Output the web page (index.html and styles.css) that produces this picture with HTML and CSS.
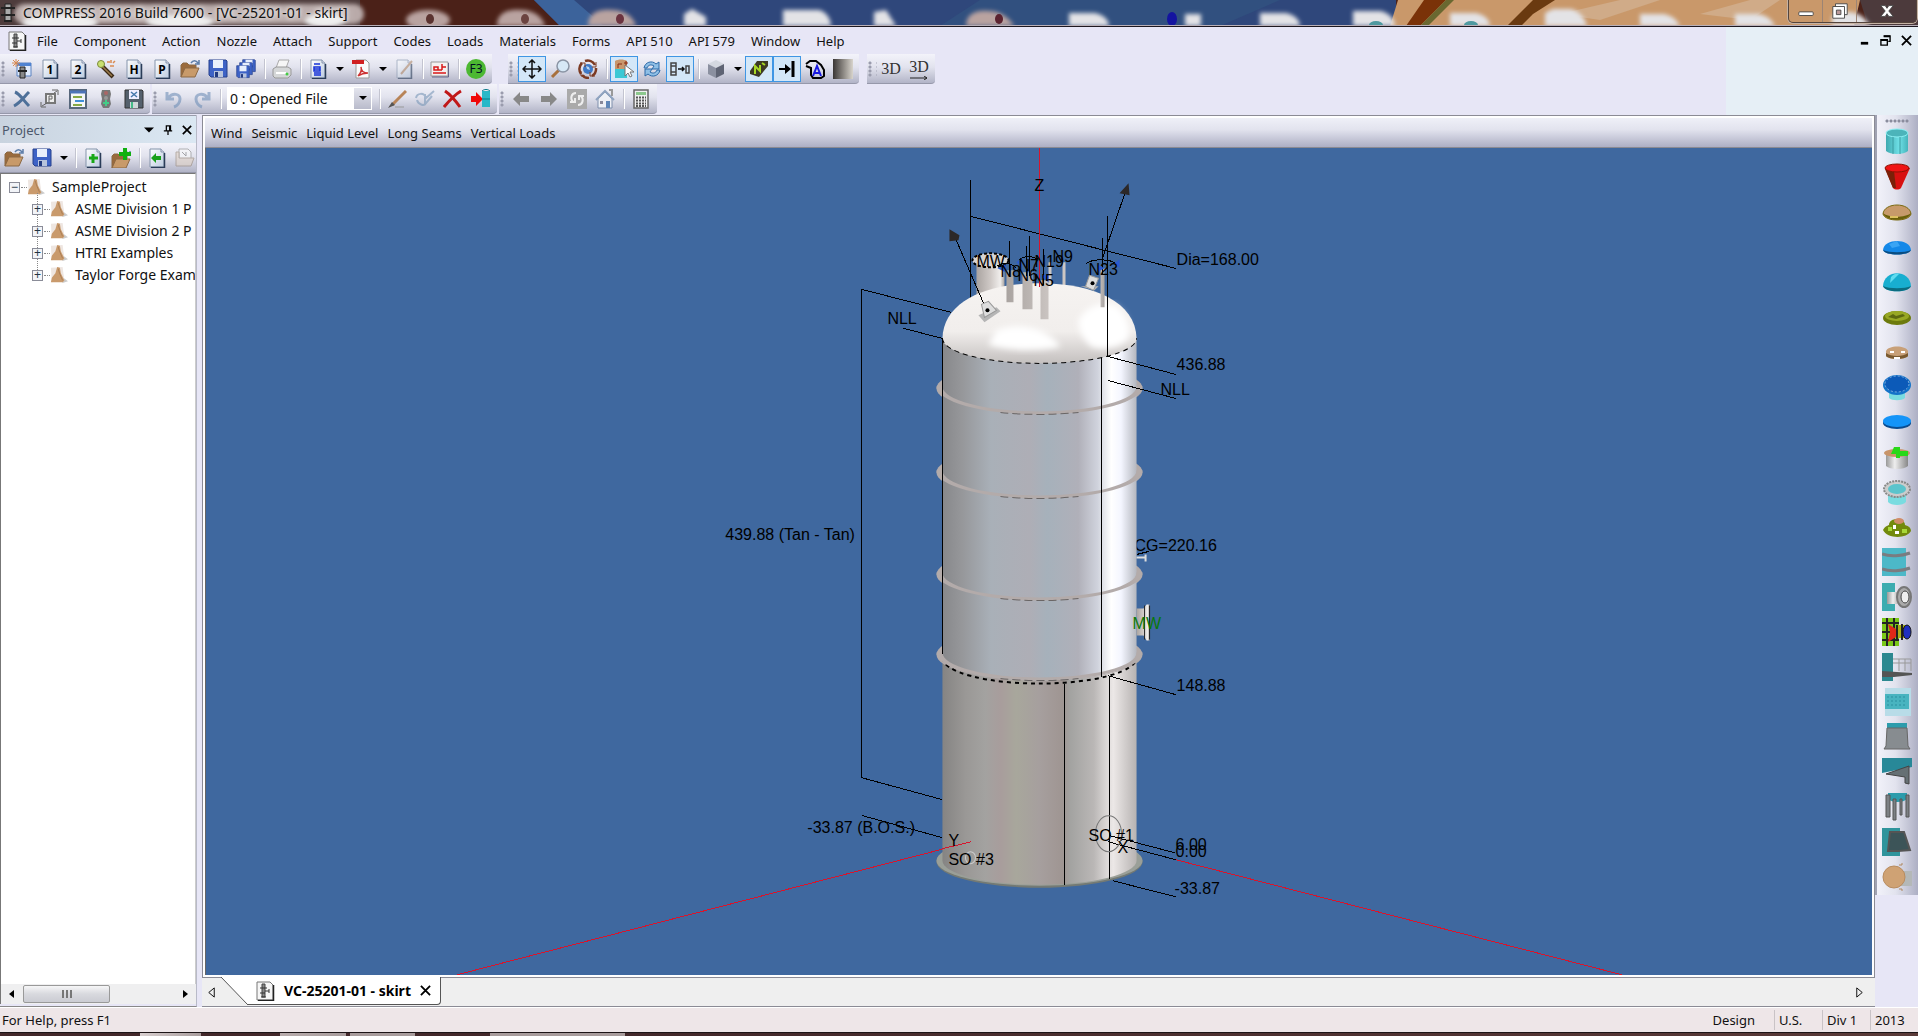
FILE: index.html
```html
<!DOCTYPE html>
<html lang="en">
<head>
	<meta charset="utf-8">
	<title>COMPRESS 2016 Build 7600 - [VC-25201-01 - skirt]</title>
	<link rel="stylesheet" href="styles.css">
</head>
<body>

<!-- shared icon parts -->
<svg class="defs" aria-hidden="true">
	<defs>
		<linearGradient id="gPage" x1="0" y1="0" x2="1" y2="1"><stop offset="0" stop-color="#fff"/><stop offset="1" stop-color="#bccbe0"/></linearGradient>
		<linearGradient id="gGrey" x1="0" x2="1"><stop offset="0" stop-color="#3a3634"/><stop offset="1" stop-color="#d8d4cc"/></linearGradient>
		<linearGradient id="gCyan" x1="0" x2="1"><stop offset="0" stop-color="#3fa9b0"/><stop offset=".6" stop-color="#6fe0e6"/><stop offset="1" stop-color="#46b4bb"/></linearGradient>
		<linearGradient id="gSteel" x1="0" x2="1"><stop offset="0" stop-color="#999"/><stop offset=".4" stop-color="#eee"/><stop offset="1" stop-color="#888"/></linearGradient>
		<symbol id="page" viewBox="0 0 20 20"><path d="M3 1h11l3 3v15H3z" fill="url(#gPage)" stroke="#8494ab"/><path d="M4 19.500h13.500V5" fill="none" stroke="#2a3c58" stroke-width="1.500"/><path d="M14 1v3h3" fill="#dde" stroke="#8494ab"/></symbol>
		<symbol id="folder" viewBox="0 0 20 20"><path d="M1 18V6l2-2h4l2 2h7v4" fill="#9a6a3c" stroke="#8b6844"/><path d="M1 18l4-9h14l-4 9z" fill="#c89a6a" stroke="#8b6844"/><path d="M11 4c2-3 5-3 7 0M19 1v4h-4" fill="none" stroke="#5d7da8" stroke-width="1.500"/></symbol>
		<symbol id="disk" viewBox="0 0 20 20"><path d="M1 1h17l1 1v16H3l-2-2z" fill="#3d62c6" stroke="#26408c"/><path d="M5 1h10v8H5z" fill="#e8effc"/><path d="M6 12h9v6H6z" fill="#b8c4dc"/><path d="M7 13h3v5H7z" fill="#223a80"/></symbol>
		<symbol id="vessel" viewBox="0 0 20 20"><path d="M2 1h13l3 3v15H2z" fill="#f6f6f6" stroke="#777"/><path d="M3 19.500h15.500V4" fill="none" stroke="#222" stroke-width="1.500"/><path d="M7 3h3v13H7z" fill="#888" stroke="#444"/><path d="M5 7h7M5 12h5M10 10h4M14 8v4M6 16h5" stroke="#333" fill="none"/></symbol>
		<symbol id="hand" viewBox="0 0 20 20"><path d="M1 2l13-1 2 15-14 2z" fill="#eee6e1"/><path d="M12 14h4l4 3-6 2z" fill="#ccc"/><path d="M8 1l3 1 1 6 4 8-2 2H1l1-5 4-5z" fill="#c99a6c"/><path d="M9 3l2 6 3 7" fill="none" stroke="#a87c52"/></symbol>
	</defs>
</svg>

<header class="titlebar">
	<svg class="glass" viewBox="0 0 1918 26" preserveAspectRatio="none" aria-hidden="true">
		<defs><filter id="soft" x="-20%" y="-50%" width="140%" height="200%"><feGaussianBlur stdDeviation="2"/></filter></defs>
		<rect width="1918" height="26" fill="#4b2118"/>
		<rect width="360" height="26" fill="#4e3c3c"/>
		<path d="M534 0h862v26H560z" fill="#2f477b"/>
		<path d="M534 0h40l30 26h-44z" fill="#3c639b"/>
		<path d="M980 0h300l-60 26H940z" fill="#31507f"/>
		<path d="M1398 0h462l-6 26h-464z" fill="#c9986a"/>
		<path d="M1424 0h22l-26 26h-14z" fill="#7a3208"/>
		<path d="M1446 0h8l-26 26h-8z" fill="#6a6830"/>
		<path d="M1533 0h22l-22 14-12 12h-14z" fill="#6a3a10"/>
		<path d="M1560 14l60-14h40l-60 20zM1700 14l50-14h30l-30 20z" fill="#d0ab88"/>
		<path d="M1860 0h58v26h-50z" fill="#4c3a3c"/>
		<g filter="url(#soft)">
			<rect x="14" y="4" width="350" height="20" rx="10" fill="#b9aaa9"/>
			<g fill="#eee"><ellipse cx="60" cy="23" rx="38" ry="8"/><ellipse cx="180" cy="22" rx="34" ry="7"/><ellipse cx="325" cy="21" rx="20" ry="7"/></g>
			<g fill="#b9a3a0"><ellipse cx="428" cy="20" rx="22" ry="10"/><path d="M497 26c0-14 12-17 24-16 14 0 22 8 24 16z"/><path d="M588 26c0-14 12-17 24-16 14 0 22 8 24 16z"/><path d="M966 26c0-12 10-16 22-15 14 0 22 8 26 15z"/></g>
			<g fill="#e3e3e6"><path d="M684 26V14l8-5 14 8v9z"/><path d="M783 26V10h36c8 2 12 10 12 16z"/><path d="M874 26V12l12-2 10 16z"/><path d="M1069 26V13h26c10 2 14 8 14 13z"/><path d="M1185 26V14h16v12z"/><path d="M1260 26V13h26c10 2 14 8 14 13z"/><path d="M1353 26V11h28c10 3 14 9 14 15z"/><path d="M1450 26V13h26c10 2 14 8 14 13z"/><path d="M1545 26V13l8-4h18c10 3 14 10 16 17z"/><path d="M1640 26V14h24c10 2 14 8 16 12z"/><path d="M1735 26V14h24c10 2 14 8 16 12z"/><path d="M1832 26V16l16-4c10 0 18 6 22 14z"/></g>
		</g>
		<g><ellipse cx="430" cy="19" rx="4" ry="5" fill="#5b3330"/><ellipse cx="525" cy="19" rx="4" ry="5" fill="#6b4340"/><ellipse cx="620" cy="19" rx="4" ry="5" fill="#6b3340"/><ellipse cx="999" cy="19" rx="4" ry="5" fill="#5b2330"/><ellipse cx="1376" cy="25" rx="7" ry="4" fill="#4f9aa0"/><ellipse cx="1471" cy="25" rx="7" ry="4" fill="#4f9aa0"/><ellipse cx="1172" cy="19" rx="5" ry="7" fill="#1414a0"/></g>
	</svg>
	<svg class="icon app" viewBox="0 0 20 20"><path d="M7 1h6v17H7z" fill="#aaa" stroke="#222"/><path d="M3 5h14M3 12h14M6 18h8" stroke="#222" stroke-width="2"/></svg>
	<h1 class="caption">COMPRESS 2016 Build 7600 - [VC-25201-01 - skirt]</h1>
	<div class="winbuttons">
		<button aria-label="Minimize"><svg viewBox="0 0 20 20"><rect x="2" y="11" width="16" height="4" rx="1" fill="#fff" stroke="#444"/></svg></button>
		<button aria-label="Restore"><svg viewBox="0 0 20 20"><path d="M5 2h13v12H5z" fill="#fff" stroke="#444"/><path d="M2 5h13v13H2z" fill="#fff" stroke="#444"/><path d="M6 9h5v5H6z" fill="#b99" stroke="#444"/></svg></button>
		<button aria-label="Close" class="wide"><svg viewBox="0 0 20 20"><path d="M3 4h5l2 3 2-3h5l-5 6 5 6h-5l-2-3-2 3H3l5-6z" fill="#fff" stroke="#444"/></svg></button>
	</div>
</header>

<nav class="menubar">
	<svg class="icon doc"><use href="#vessel"/></svg>
	<button>File</button><button>Component</button><button>Action</button><button>Nozzle</button><button>Attach</button><button>Support</button><button>Codes</button><button>Loads</button><button>Materials</button><button>Forms</button><button>API 510</button><button>API 579</button><button>Window</button><button>Help</button>
	<div class="mdibuttons">
		<button aria-label="Minimize document"><svg viewBox="0 0 12 12"><path d="M2 9h8" stroke="#000" stroke-width="3"/></svg></button>
		<button aria-label="Restore document"><svg viewBox="0 0 12 12"><path d="M4 1h7v6H9M1 5h7v6H1z" fill="none" stroke="#000" stroke-width="1.500"/><path d="M4 1.500h7M1 5.500h7" stroke="#000" stroke-width="2"/></svg></button>
		<button aria-label="Close document"><svg viewBox="0 0 12 12"><path d="M1 1l10 10M11 1L1 11" stroke="#000" stroke-width="2"/></svg></button>
	</div>
</nav>

<div class="toolbars">
	<div class="toolrow">
		<div class="toolbar">
			<span class="grip"></span>
			<button aria-label="New"><svg viewBox="0 0 20 20"><path d="M5 4h14v13H5z" fill="#dfeafb" stroke="#5a82c0"/><path d="M5 4h14v3H5z" fill="#4f83d2"/><path d="M8 8h5v11H8z" fill="#888" stroke="#222"/><path d="M6 12h9" stroke="#222" stroke-width="2"/><path d="M4 0v8M0 4h8M1 1l6 6M7 1L1 7" stroke="#d98a52"/></svg></button>
			<button aria-label="New Division 1"><svg viewBox="0 0 20 20"><use href="#page"/><text x="10" y="15" class="glyph">1</text></svg></button>
			<button aria-label="New Division 2"><svg viewBox="0 0 20 20"><use href="#page"/><text x="10" y="15" class="glyph">2</text></svg></button>
			<button aria-label="Wizard"><svg viewBox="0 0 20 20"><path d="M5 6l12 12" stroke="#3c2a16" stroke-width="4"/><path d="M6 7l10 10" stroke="#9a7a4c" stroke-width="1.500"/><circle cx="5" cy="5" r="3.500" fill="#c9e070" stroke="#7a8a3a"/><path d="M11 3h3M15 1v3M14 7h4M17 4l2-2" stroke="#d98a52" stroke-width="1.500"/></svg></button>
			<button aria-label="Heat exchanger"><svg viewBox="0 0 20 20"><use href="#page"/><text x="10" y="15" class="glyph">H</text></svg></button>
			<button aria-label="New project"><svg viewBox="0 0 20 20"><use href="#page"/><text x="10" y="15" class="glyph">P</text></svg></button>
			<button aria-label="Open"><svg viewBox="0 0 20 20"><use href="#folder"/></svg></button>
			<button aria-label="Save"><svg viewBox="0 0 20 20"><use href="#disk"/></svg></button>
			<button aria-label="Save all"><svg viewBox="0 0 20 20"><use href="#disk" x="6" width="14" height="14"/><use href="#disk" x="3" y="3" width="14" height="14"/><use href="#disk" y="6" width="14" height="14"/></svg></button>
			<span class="sep"></span>
			<button aria-label="Print"><svg viewBox="0 0 20 20"><path d="M7 1h10l-3 8H4z" fill="#f6f6f6" stroke="#aaa"/><path d="M1 10l3-2h12l3 2v6l-3 3H3l-2-2z" fill="#d5d7d8" stroke="#999"/><path d="M4 14h10" stroke="#fff" stroke-width="2"/><circle cx="15" cy="15" r="1.500" fill="#4c4"/></svg></button>
			<span class="sep"></span>
			<button aria-label="Report"><svg viewBox="0 0 20 20"><use href="#page"/><path d="M6 5h6M6 8h6v4H6zM6 10h6M6 14h7M6 16h7" stroke="#1432d8" stroke-width="1.500" fill="none"/></svg></button>
			<button class="arrow" aria-label="Report options"></button>
			<button aria-label="PDF"><svg viewBox="0 0 20 20"><path d="M5 1h10l3 3v15H5z" fill="#fafafa" stroke="#999"/><path d="M1 1h12v4H1z" fill="#d02020"/><path d="M7 17c3-3 4-6 3-9 0 4 3 6 7 6-4 0-7 1-10 3z" fill="none" stroke="#c33" stroke-width="1.500"/></svg></button>
			<button class="arrow" aria-label="PDF options"></button>
			<button aria-label="Edit page" class="dim"><svg viewBox="0 0 20 20"><use href="#page"/><path d="M18 2L7 15" stroke="#b08a6a" stroke-width="2"/></svg></button>
			<span class="sep"></span>
			<button aria-label="Overlay"><svg viewBox="0 0 20 20"><path d="M1 3h17v14H1z" fill="#f4f0f0" stroke="#999"/><path d="M18.500 4v14H2" fill="none" stroke="#668"/><path d="M3 14h13M4 11V8h4v3zM4 11h8M12 5v6M12 8h4" stroke="#d81818" stroke-width="1.500" fill="none"/></svg></button>
			<span class="sep"></span>
			<button aria-label="F3"><svg viewBox="0 0 20 20"><circle cx="10" cy="10" r="10" fill="#4cb832"/><text x="10" y="14" class="f3">F3</text></svg></button>
		</div>
		<div class="toolbar apart">
			<span class="grip"></span>
			<button aria-label="Pan" class="on"><svg viewBox="0 0 20 20"><path d="M10 1v18M1 10h18M7 4l3-3 3 3M7 16l3 3 3-3M4 7l-3 3 3 3M16 7l3 3-3 3" stroke="#111" stroke-width="1.500" fill="none"/></svg></button>
			<button aria-label="Zoom"><svg viewBox="0 0 20 20"><path d="M9 11l-7 7" stroke="#a8703c" stroke-width="3"/><circle cx="13" cy="7" r="6" fill="#d6e8f6" stroke="#8a94a4" stroke-width="1.500"/></svg></button>
			<button aria-label="Rotate"><svg viewBox="0 0 20 20"><circle cx="10" cy="10" r="5" fill="#3f7ac8"/><path d="M8 7l3 1 1 3-3-1z" fill="#b8d4f0"/><path d="M3 15A8.500 8.500 0 0 1 4 4M7 2a8.500 8.500 0 0 1 10 4M18 9a8.500 8.500 0 0 1-4 8M11 19a8.500 8.500 0 0 1-7-3" fill="none" stroke="#7c3a22" stroke-width="2.500"/><path d="M2 4h5v4M18 3v5h-4M17 17h-5v-4M3 12v5h4" fill="none" stroke="#7c3a22"/></svg></button>
			<span class="sep"></span>
			<button aria-label="Select" class="on"><svg viewBox="0 0 20 20"><path d="M1 2c3-2 9-2 12 0v8H1z" fill="#c8976c"/><path d="M1 10h12v9H1z" fill="#3cc8d4"/><path d="M4 9V5h4M10 4h4M12 2v4" stroke="#8a2a10" fill="none"/><path d="M11 6v11l3-3 2 4 2-1-2-4h4z" fill="#fff" stroke="#777"/></svg></button>
			<button aria-label="Refresh"><svg viewBox="0 0 20 20"><path d="M2 9c1-6 8-8 12-4l3-2v7h-7l2-3C9 5 6 6 5 9zM18 11c-1 6-8 8-12 4l-3 2v-7h7l-2 3c3 2 6 1 7-2z" fill="#8ebfe6" stroke="#2d6aa8"/></svg></button>
			<button aria-label="Fit" class="on"><svg viewBox="0 0 20 20"><path d="M1 4h5v12H1zM1 7h5M1 13h5M16 7h3v7h-3z" fill="none" stroke="#444" stroke-width="1.500"/><path d="M8 10h6M12 8l2 2-2 2" stroke="#111" stroke-width="1.500" fill="none"/></svg></button>
			<span class="sep"></span>
			<button aria-label="View"><svg viewBox="0 0 20 20"><path d="M2 5l8-4 8 4-8 4z" fill="#d4d8e0"/><path d="M2 5l8 4v10l-8-4z" fill="#8b90a0"/><path d="M18 5l-8 4v10l8-4z" fill="#5f6474"/></svg></button>
			<button class="arrow" aria-label="View options"></button>
			<button aria-label="Nozzle labels" class="on"><svg viewBox="0 0 20 20"><path d="M1 12L8 2h11v5l-9 11-9-3z" fill="#3c3a24"/><path d="M6 15V7l5 5V6M13 4l3 2" stroke="#a6d824" stroke-width="2" fill="none"/></svg></button>
			<button aria-label="Dimensions" class="on"><svg viewBox="0 0 20 20"><path d="M2 9h6V5l6 5-6 5v-4H2z" fill="#000"/><path d="M16 2v16" stroke="#000" stroke-width="3"/></svg></button>
			<button aria-label="Annotations"><svg viewBox="0 0 20 20"><path d="M1 5l4-3h6l5 4 3 5v6l-3 2H8l-2-3V9L1 7" fill="none" stroke="#000" stroke-width="2"/><path d="M8 17l4-10 4 10M9 14h6" fill="none" stroke="#1818e0" stroke-width="2"/></svg></button>
			<button aria-label="Transparency"><svg viewBox="0 0 20 20"><path d="M0 0h20v20H0z" fill="url(#gGrey)"/></svg></button>
		</div>
		<div class="toolbar">
			<span class="grip"></span>
			<button class="threed">3D</button>
			<button class="threed">3D<svg class="under" viewBox="0 0 18 4"><path d="M0 2h17M14 0l3 2-3 2" stroke="#222" fill="none"/></svg></button>
		</div>
	</div>
	<div class="toolrow">
		<div class="toolbar">
			<span class="grip"></span>
			<button aria-label="Cut"><svg viewBox="0 0 20 20"><path d="M3 3c5 2 8 8 14 14M17 3C12 8 8 14 2 17" stroke="#4e7099" stroke-width="3" fill="none"/></svg></button>
			<button aria-label="Properties"><svg viewBox="0 0 20 20"><path d="M6 5h9v9H6z" fill="#eee" stroke="#777" stroke-width="2"/><path d="M9 13V7h3v3H9M1 13v5h5M2 17l5-3M12 1h6v5M17 2l-3 2" stroke="#666" fill="none"/></svg></button>
			<button aria-label="List"><svg viewBox="0 0 20 20"><path d="M2 1h16v18H2z" fill="#f4f6f8" stroke="#57677c" stroke-width="2"/><path d="M2 3h16" stroke="#4d74b8" stroke-width="3"/><path d="M5 8h9M5 16h9" stroke="#86a844" stroke-width="2"/><path d="M7 12h9" stroke="#3f90d8" stroke-width="2"/></svg></button>
			<button aria-label="Status"><svg viewBox="0 0 20 20"><path d="M6 1h8l1 4-1 5 1 5-2 4H7l-2-4 1-5-1-5z" fill="#777"/><circle cx="10" cy="4" r="2" fill="#a66"/><circle cx="10" cy="9" r="2" fill="#999"/><path d="M10 11v6M7 14h6" stroke="#4c8" stroke-width="2"/></svg></button>
			<button aria-label="Export"><svg viewBox="0 0 20 20"><path d="M1 1h17l1 1v17H1z" fill="#54606c" stroke="#333"/><path d="M5 1h10v9H5z" fill="#eef"/><path d="M7 3l6 5M13 3L7 8" stroke="#47a" stroke-width="1.500"/><path d="M6 13h8v6H6z" fill="#cfd6d8"/><path d="M8 13v6" stroke="#4b8" stroke-width="2"/></svg></button>
		</div>
		<div class="toolbar">
			<span class="grip"></span>
			<button aria-label="Undo" class="dim"><svg viewBox="0 0 20 20"><path d="M3 3v7h7M4 9c5-6 12-4 12 1 0 4-3 7-6 8" stroke="#7090b8" stroke-width="3" fill="none"/></svg></button>
			<button aria-label="Redo" class="dim"><svg viewBox="0 0 20 20"><path d="M17 3v7h-7M16 9C11 3 4 5 4 10c0 4 3 7 6 8" stroke="#7090b8" stroke-width="3" fill="none"/></svg></button>
			<span class="sep"></span>
			<span class="combo"><select aria-label="History"><option>0 : Opened File</option></select></span>
			<span class="sep"></span>
			<button aria-label="Edit"><svg viewBox="0 0 20 20"><path d="M19 2L5 16" stroke="#b88458" stroke-width="3"/><path d="M5 13l-4 6 7-3z" fill="#555"/><path d="M8 18h9" stroke="#999"/></svg></button>
			<button aria-label="Apply" class="dim"><svg viewBox="0 0 20 20"><path d="M1 9c1-5 8-6 10 0l8-7M2 11c1 4 7 7 9 3l6-7M10 5v10" stroke="#7a98b8" stroke-width="2" fill="none"/></svg></button>
			<button aria-label="Delete"><svg viewBox="0 0 20 20"><path d="M2 2c6 4 10 9 15 16M18 2C11 6 6 12 1 18" stroke="#c01818" stroke-width="3" fill="none"/></svg></button>
			<button aria-label="Insert"><svg viewBox="0 0 20 20"><path d="M0 7h5V3l7 7-7 7v-4H0z" fill="#f00808"/><path d="M11 2h8v16h-8z" fill="#28b8c8"/><path d="M11 2c2-2 6-2 8 0M11 10h8" stroke="#087888" fill="none"/></svg></button>
		</div>
		<div class="toolbar">
			<span class="grip"></span>
			<button aria-label="Back"><svg viewBox="0 0 20 20"><path d="M2 10l7-7v4h9v6H9v4z" fill="#888"/></svg></button>
			<button aria-label="Forward"><svg viewBox="0 0 20 20"><path d="M18 10l-7-7v4H2v6h9v4z" fill="#888"/></svg></button>
			<button aria-label="Reload"><svg viewBox="0 0 20 20"><path d="M0 0h20v20H0z" fill="#aaa"/><path d="M9 4c-5 0-6 6-3 9M3 13h5V9M11 16c5 0 6-6 3-9M17 7h-5v4" stroke="#eee" stroke-width="2" fill="none"/></svg></button>
			<button aria-label="Home"><svg viewBox="0 0 20 20"><path d="M3 10v9h14v-9l-7-7z" fill="#eef0f6" stroke="#7f8fac"/><path d="M1 11l9-9 9 9" fill="none" stroke="#90a4c0" stroke-width="2"/><path d="M14 1h3v6" fill="none" stroke="#999" stroke-width="2"/><path d="M11 12h4v7h-4z" fill="#5f86b8"/><path d="M5 12h3v3H5z" fill="#889"/></svg></button>
			<span class="sep"></span>
			<button aria-label="Calculator"><svg viewBox="0 0 20 20"><path d="M3 1h14v18H3z" fill="#f0f0f0" stroke="#666" stroke-width="1.500"/><path d="M5 3h10v3H5z" fill="#8cc88c"/><path d="M5 8.500h10M5 11.500h10M5 14.500h10M5 17h10" stroke="#555" stroke-width="2" stroke-dasharray="2 1"/></svg></button>
		</div>
	</div>
</div>

<div class="workspace">
	<aside class="project">
		<div class="panelhead">
			<h2>Project</h2>
			<button aria-label="Menu"><svg viewBox="0 0 12 12"><path d="M0 3h12L6 9z"/></svg></button>
			<button aria-label="Pin"><svg viewBox="0 0 12 12"><path d="M4 1h5v6H4zM1 7h10M6 7v5M8 1v6" fill="none" stroke="#000" stroke-width="1.500"/></svg></button>
			<button aria-label="Close panel"><svg viewBox="0 0 12 12"><path d="M1 1l10 10M11 1L1 11" stroke="#000" stroke-width="2"/></svg></button>
		</div>
		<div class="toolbar paneltools">
			<button aria-label="Open project"><svg viewBox="0 0 20 20"><use href="#folder"/></svg></button>
			<button aria-label="Save project"><svg viewBox="0 0 20 20"><use href="#disk"/></svg></button>
			<button class="arrow" aria-label="Save options"></button>
			<span class="sep"></span>
			<button aria-label="Add file"><svg viewBox="0 0 20 20"><use href="#page"/><path d="M10 6v9M6 10h9" stroke="#18a818" stroke-width="3"/></svg></button>
			<button aria-label="Add folder"><svg viewBox="0 0 20 20"><use href="#folder" y="2"/><path d="M14 0v12M8 6h12" stroke="#10b010" stroke-width="4"/></svg></button>
			<span class="sep"></span>
			<button aria-label="Import"><svg viewBox="0 0 20 20"><use href="#page"/><path d="M4 10l5-5v3h5v4H9v3z" fill="#18a018"/></svg></button>
			<button aria-label="Open copy" class="dim"><svg viewBox="0 0 20 20"><path d="M4 1h9l3 3v8H4z" fill="#fafafa" stroke="#888"/><path d="M1 18V4h3v6h15l-3 8z" fill="#e0d2c6" stroke="#988878"/><path d="M7 4l4 4V4" stroke="#777" fill="none"/></svg></button>
		</div>
		<ul class="tree">
			<li><span class="twist">&minus;</span><svg class="icon"><use href="#hand"/></svg>SampleProject</li>
			<li class="sub"><span class="twist">+</span><svg class="icon"><use href="#hand"/></svg>ASME Division 1 P</li>
			<li class="sub"><span class="twist">+</span><svg class="icon"><use href="#hand"/></svg>ASME Division 2 P</li>
			<li class="sub"><span class="twist">+</span><svg class="icon"><use href="#hand"/></svg>HTRI Examples</li>
			<li class="sub"><span class="twist">+</span><svg class="icon"><use href="#hand"/></svg>Taylor Forge Exam</li>
		</ul>
		<div class="hscroll">
			<button aria-label="Scroll left"><svg viewBox="0 0 12 12"><path d="M8 2v8L3 6z"/></svg></button>
			<span class="thumb"><i></i><i></i><i></i></span>
			<button aria-label="Scroll right"><svg viewBox="0 0 12 12"><path d="M4 2v8l5-4z"/></svg></button>
		</div>
	</aside>

	<main class="document">
		<div class="frame">
			<nav class="subbar"><button>Wind</button><button>Seismic</button><button>Liquid Level</button><button>Long Seams</button><button>Vertical Loads</button></nav>
			<div class="canvas">
				<svg viewBox="206 148 1665 826" role="img" aria-label="Vertical vessel with skirt">
					<defs>
						<linearGradient id="shell" x1="0" x2="1"><stop offset="0" stop-color="#87888b"/><stop offset=".1" stop-color="#96979a"/><stop offset=".25" stop-color="#a9b0b8"/><stop offset=".45" stop-color="#aeaeb6"/><stop offset=".54" stop-color="#a6b1bb"/><stop offset=".7" stop-color="#b0b0b9"/><stop offset=".8" stop-color="#d0d3dd"/><stop offset=".87" stop-color="#fff"/><stop offset=".92" stop-color="#f4f6ff"/><stop offset="1" stop-color="#b4b7bf"/></linearGradient>
						<linearGradient id="skirt" x1="0" x2="1"><stop offset="0" stop-color="#858483"/><stop offset=".12" stop-color="#9a9896"/><stop offset=".22" stop-color="#a3a2a0"/><stop offset=".3" stop-color="#a89d9c"/><stop offset=".38" stop-color="#a8a79c"/><stop offset=".5" stop-color="#a69f9e"/><stop offset=".62" stop-color="#9f9592"/><stop offset=".66" stop-color="#a3a3a1"/><stop offset=".78" stop-color="#bab7b6"/><stop offset=".88" stop-color="#ece8e7"/><stop offset="1" stop-color="#b7b3b2"/></linearGradient>
						<linearGradient id="dome" x1="0" y1="0" x2="0" y2="1"><stop offset="0" stop-color="#f6f3f1"/><stop offset=".6" stop-color="#f1eeec"/><stop offset="1" stop-color="#c4c0bf"/></linearGradient>
						<linearGradient id="pipe" x1="0" x2="1"><stop offset="0" stop-color="#a9a3a0"/><stop offset=".5" stop-color="#cfc9c6"/><stop offset=".85" stop-color="#f0eeec"/><stop offset="1" stop-color="#a9a3a0"/></linearGradient>
						<filter id="shine"><feGaussianBlur stdDeviation="3"/></filter>
						<g id="ringBack"><ellipse cx="1039" cy="0" rx="103" ry="26" fill="#b3abaa"/></g>
						<g id="ringFront"><path d="M936 -2A103 28 0 0 0 1142 -2L1136 -2A97 25 0 0 1 942 -2Z" fill="#b3abaa"/><path d="M1000 24A103 27 0 0 0 1078 24" fill="none" stroke="#6a6666" stroke-dasharray="8 4"/></g>
					</defs>
					<!-- lines and labels behind the vessel -->
					<g class="red"><path d="M971 841L457 974M1175 859L1621 974"/></g>
					<g class="line">
						<path d="M970 180v120M970 216L1175 268M951 312L861 289V777L942 799M862 815L942 837M903 328L942 338M1136 554l12-3"/>
					</g>
					<text x="1134" y="551">CG=220.16</text>
					<!-- shell, rings and skirt -->
					<ellipse cx="1039" cy="861" rx="103" ry="26" fill="#747a74"/>
					<ellipse cx="1039" cy="860" rx="103" ry="25" fill="#9a9f98"/>
					<path d="M942 650V860A97 24 0 0 0 1136 860V650Z" fill="url(#skirt)"/>
					<use href="#ringBack" y="388"/><use href="#ringBack" y="472"/><use href="#ringBack" y="574"/><use href="#ringBack" y="654"/>
					<path d="M942 338V655A97 25 0 0 0 1136 655V338Z" fill="url(#shell)"/>
					<path d="M942 657A97 26 0 0 0 1136 657" fill="none" stroke="#000" stroke-width="2" stroke-dasharray="4 4"/>
					<use href="#ringFront" y="388"/><use href="#ringFront" y="472"/><use href="#ringFront" y="574"/><use href="#ringFront" y="654"/>
					<!-- nozzles behind the head crown -->
					<path d="M976 264h28v40h-28z" fill="url(#pipe)"/>
					<path d="M1062 262h3v28h-3zM1048 262h3v26h-3z" fill="#ccc6c3"/>
					<path d="M942 338C943 302 984 283 1039 283S1135 302 1136 338A97 25 0 0 1 942 338Z" fill="url(#dome)"/>
					<g filter="url(#shine)" fill="#fff"><path d="M996 330c20-8 50-4 64 16-20 6-60 4-72-2z"/><path d="M1078 320c8-16 28-20 38-14 10 8 14 20 12 32-10 12-30 12-38 8-8-8-12-16-12-26z"/></g>
					<path d="M942 338A97 25 0 0 0 1136 338" fill="none" stroke="#000" stroke-dasharray="5 4"/>
					<ellipse cx="990" cy="260" rx="18" ry="7" fill="#d8d4d2" stroke="#000" stroke-width="2" stroke-dasharray="3 2"/>
					<path d="M1006 270h7v32h-7zM1022 272h10v37h-10zM1040 280h8v39h-8zM1100 268h4v39h-4z" fill="url(#pipe)"/>
					<g class="line">
						<path d="M942 338V653M1101 358V676M1107 216V356L1175 374M1107 380l68 18M1107 675l68 19M1064 683v201M1109 676v202M1109 835l65 17M1107 841l68 18M1112 880l63 16"/>
						<path d="M1009 241v34M1029 236v40M1026 246v30M1043 249v36M1102 238v36M1102 258l22-64M984 305L955 238"/>
						<path d="M1085 264c6-6 24-6 32 0M1018 260c8-6 14-4 20-1M996 266c8-5 14-4 20 2"/>
					</g>
					<path d="M1128 183l1 12-10-2zM949 229l10 6-1 5-9 1z" fill="#2c2828"/>
					<path d="M997 268l8-4v8zM1016 262l5-4v9zM1096 264l8 4-6 3zM1114 263l5-4v9zM1040 276l8-3v9z" fill="#2a5ad0"/>
					<path d="M978 315l18-8 4 4-16 11z" fill="#b5b5b5"/><path d="M981 304l7-3 8 9-12 7z" fill="#ddd" stroke="#999"/><circle cx="987" cy="310" r="2"/>
					<path d="M1080 286l14 4 4-4z" fill="#b5b5b5"/><path d="M1089 275l9 3-5 12-8-4z" fill="#ddd" stroke="#999"/><circle cx="1092" cy="283" r="2"/>
					<path d="M1136 608h7l3-4h3v36h-3l-3-5h-7z" fill="url(#pipe)"/><path d="M1144 605v34M1149 605v34" stroke="#222"/>
					<path d="M1136 557h9M1145 554v7" stroke="#ddd" stroke-width="2"/>
					<ellipse cx="1108" cy="833" rx="13" ry="18" fill="none" stroke="#777"/>
					<ellipse cx="970" cy="857" rx="5" ry="6" fill="none" stroke="#ccc"/>
					<g class="red"><path d="M1039 148V287M942 848L971 841"/></g>
					<!-- labels -->
					<text x="1034" y="191">Z</text>
					<text x="1176" y="265">Dia=168.00</text>
					<text x="887" y="324">NLL</text>
					<text x="1176" y="370">436.88</text>
					<text x="1160" y="395">NLL</text>
					<text x="725" y="540">439.88 (Tan - Tan)</text>
					<text x="1176" y="690">148.88</text>
					<text x="1132" y="628" class="green">MW</text>
					<text x="976" y="267">MW</text>
					<text x="1000" y="277">N8</text>
					<text x="1018" y="271">N7</text>
					<text x="1017" y="281">N6</text>
					<text x="1033" y="286">N5</text>
					<text x="1034" y="267">N19</text>
					<text x="1052" y="262">N9</text>
					<text x="1088" y="275">N23</text>
					<text x="807" y="832">-33.87 (B.O.S.)</text>
					<text x="948" y="845">Y</text>
					<text x="948" y="864">SO #3</text>
					<text x="1088" y="840">SO #1</text>
					<text x="1117" y="852">X</text>
					<text x="1175" y="849">6.00</text>
					<text x="1175" y="856">0.00</text>
					<text x="1174" y="893">-33.87</text>
				</svg>
			</div>
		</div>
		<div class="tabstrip">
			<button aria-label="Previous tab"><svg viewBox="0 0 12 12"><path d="M9 1v10L3 6z" fill="none" stroke="#000"/></svg></button>
			<div class="tab">
				<svg class="slant" viewBox="0 0 27 28" preserveAspectRatio="none"><path d="M0 0h27v28z" fill="#fff"/><path d="M0 0l27 28" stroke="#555"/></svg>
				<div class="tabbody">
					<svg class="icon"><use href="#vessel"/></svg>
					<a href="#">VC-25201-01 - skirt</a>
					<button aria-label="Close tab"><svg viewBox="0 0 12 12"><path d="M1 1l10 10M11 1L1 11" stroke="#000" stroke-width="2"/></svg></button>
				</div>
			</div>
			<button class="next" aria-label="Next tab"><svg viewBox="0 0 12 12"><path d="M3 1v10l6-5z" fill="none" stroke="#000"/></svg></button>
		</div>
	</main>

	<div class="palette">
		<span class="dots"></span>
		<button aria-label="Cylinder"><svg viewBox="0 0 30 28"><path d="M4 5v18c4 4 18 4 22 0V5z" fill="url(#gCyan)"/><ellipse cx="15" cy="5" rx="11" ry="4" fill="#4cb4ba" stroke="#8ff0f4"/><path d="M11 9v17M18 9v17" stroke="#3a9aa0"/></svg></button>
		<button aria-label="Cone"><svg viewBox="0 0 30 28"><path d="M3 5l8 20c2 2 6 2 8 0L28 5z" fill="#d81010"/><path d="M3 6l8 19h3L12 8z" fill="#7a2008"/><ellipse cx="15" cy="5" rx="12" ry="4" fill="#f01414" stroke="#8a1404"/></svg></button>
		<button aria-label="Ellipsoidal head"><svg viewBox="0 0 30 28"><path d="M1 16C2 4 28 4 29 16c-2 8-26 8-28 0z" fill="#c79a6a" stroke="#7a6a10"/><path d="M1 15c6 5 22 5 28 0-2 9-26 9-28 0z" fill="#6a6008"/><path d="M8 19h8" stroke="#ddc060" stroke-width="2"/></svg></button>
		<button aria-label="Torispherical head"><svg viewBox="0 0 30 28"><path d="M1 17C2 5 28 5 29 17c-2 6-26 6-28 0z" fill="#1488e8"/><path d="M1 17c6 3 22 3 28 0-2 6-26 6-28 0z" fill="#0a4c80"/><path d="M7 11l8-3 3 5-8 2z" fill="#3aa4f4"/></svg></button>
		<button aria-label="Hemispherical head"><svg viewBox="0 0 30 28"><path d="M1 18C2 1 28 1 29 18c-2 7-26 7-28 0z" fill="#18aed0"/><path d="M1 18c6 3 22 3 28 0-2 7-26 7-28 0z" fill="#0c6c80"/><path d="M9 9c3-4 8-4 8-3L8 15z" fill="#60dcf0"/></svg></button>
		<button aria-label="Toriconical head"><svg viewBox="0 0 30 28"><ellipse cx="15" cy="15" rx="14" ry="7" fill="#6c7a0c"/><ellipse cx="15" cy="13" rx="12" ry="5" fill="#98a824"/><path d="M6 14l5-3 3 2 7-2 2 2-9 3z" fill="#5c6810"/></svg></button>
		<button aria-label="Dished cover"><svg viewBox="0 0 30 28"><path d="M4 13c2-6 20-6 22 0v5c-3 4-19 4-22 0z" fill="#c8a078"/><path d="M4 15c5 4 17 4 22 0v3c-3 4-19 4-22 0z" fill="#7a5a30"/><path d="M8 13h4v2H8zM19 13h4v2h-4zM12 19h6v2h-6z" fill="#fff"/></svg></button>
		<button aria-label="Bolted cover"><svg viewBox="0 0 30 28"><path d="M7 18h16v7c-3 3-13 3-16 0z" fill="#7adce0"/><ellipse cx="15" cy="12" rx="14" ry="10" fill="#1472c8"/><ellipse cx="15" cy="11" rx="12" ry="8" fill="#0c5ab8" stroke="#80b0e0" stroke-dasharray="2 2"/></svg></button>
		<button aria-label="Flat head"><svg viewBox="0 0 30 28"><ellipse cx="15" cy="15" rx="14" ry="6" fill="#0a4c90"/><ellipse cx="15" cy="13" rx="14" ry="6" fill="#1494f8"/></svg></button>
		<button aria-label="Flat cover"><svg viewBox="0 0 30 28"><path d="M4 10h22v13c-4 4-18 4-22 0z" fill="url(#gSteel)"/><ellipse cx="15" cy="10" rx="13" ry="4" fill="#c8946a"/><path d="M12 4h6v4h8v5h-8v2h-4v-4H9z" fill="#28d818"/></svg></button>
		<button aria-label="Flange"><svg viewBox="0 0 30 28"><path d="M6 14h18v10c-3 4-15 4-18 0z" fill="#7adce0"/><ellipse cx="15" cy="11" rx="13" ry="8" fill="#ccc" stroke="#888" stroke-width="2" stroke-dasharray="2 1"/><ellipse cx="15" cy="11" rx="9" ry="5" fill="#5cc4cc"/></svg></button>
		<button aria-label="Tubesheet"><svg viewBox="0 0 30 28"><path d="M1 17c2-4 4-4 6-5 0-8 16-8 16 0 4 1 6 3 6 6-4 8-24 8-28-1z" fill="#728a0c"/><ellipse cx="17" cy="8" rx="5" ry="3" fill="#d08c68"/><path d="M6 14h4v4H6zM20 16h5v4h-5z" fill="#a8d838"/><path d="M11 12h3v4h-3zM13 18h4v3h-4z" fill="#fff"/></svg></button>
		<button aria-label="Stiffener ring"><svg viewBox="0 0 30 28"><path d="M0 0h24v28H0z" fill="#4cb8c8"/><path d="M0 6c8 3 20 2 28-1M0 21c8 3 20 2 28-1" stroke="#7a7c80" stroke-width="3" fill="none"/></svg></button>
		<button aria-label="Nozzle"><svg viewBox="0 0 30 28"><path d="M0 0h13v28H0z" fill="#3cacb0"/><path d="M5 9h15v12H5z" fill="url(#gSteel)"/><ellipse cx="22" cy="14" rx="7" ry="10" fill="#aaa" stroke="#777" stroke-width="2"/><ellipse cx="23" cy="14" rx="4" ry="6" fill="#eee" stroke="#444"/></svg></button>
		<button aria-label="Nozzle FEA"><svg viewBox="0 0 30 28"><path d="M0 0h17v28H0z" fill="#7ac818"/><path d="M0 5h17M0 14h17M0 22h17M5 0v28M12 0v28" stroke="#222" stroke-width="2"/><path d="M6 6l8 5v8l-8 5 2-10z" fill="#e02818"/><path d="M14 7h11v13H14z" fill="#a8b018"/><path d="M15 7v14M20 6v16" stroke="#222" stroke-width="2"/><ellipse cx="25" cy="14" rx="4" ry="7" fill="#2030c0" stroke="#111"/></svg></button>
		<button aria-label="Platform"><svg viewBox="0 0 30 28"><path d="M0 0h11v28H0z" fill="#2c8890"/><path d="M11 6h18v12M11 10h18M17 6v12M23 6v12" stroke="#999" fill="none"/><path d="M0 18l30 2v2l-18 2H0z" fill="#555"/></svg></button>
		<button aria-label="Packed bed"><svg viewBox="0 0 30 28"><path d="M3 0h26v28H3z" fill="#b8dce8"/><path d="M3 6h24v15H3z" fill="#48b4c0"/><path d="M5 9h18M5 13h18M5 17h18" stroke="#2a90a0" stroke-dasharray="2 2"/></svg></button>
		<button aria-label="Skirt"><svg viewBox="0 0 30 28"><path d="M5 0h20v6H5z" fill="#2c9cac"/><path d="M5 5h20l1 18 2 3H2l2-3z" fill="#878c90" stroke="#666"/></svg></button>
		<button aria-label="Saddle"><svg viewBox="0 0 30 28"><path d="M0 0h30v9L0 15z" fill="#288898"/><path d="M4 16l23-8v18l-4-1v-6z" fill="#667074" stroke="#444"/></svg></button>
		<button aria-label="Legs"><svg viewBox="0 0 30 28"><path d="M6 0h19v6c-4 4-15 4-19 0z" fill="#2c9cac"/><path d="M4 2h4v22H4zM11 6h3v21h-3zM18 6h2v16h-2zM24 2h3v22h-3z" fill="#7c8084" stroke="#555"/></svg></button>
		<button aria-label="Lug"><svg viewBox="0 0 30 28"><path d="M0 0h18v28H0z" fill="#30949c"/><path d="M8 4h14l6 18-12 1H6z" fill="#3c5458" stroke="#555" stroke-width="2"/></svg></button>
		<button aria-label="Clip"><svg viewBox="0 0 30 28"><path d="M18 8h12v15H18z" fill="#b4b8b8"/><circle cx="12" cy="14" r="11" fill="#cfa274" stroke="#b88c60"/><path d="M17 2h3V0M17 26h3v2" stroke="#b08860" fill="none"/></svg></button>
	</div>
</div>

<footer class="statusbar">
	<span class="help">For Help, press F1</span>
	<span class="mode">Design</span>
	<span>U.S.</span>
	<span>Div 1</span>
	<span>2013</span>
</footer>
<div class="taskbar"></div>

</body>
</html>
```
FILE: styles.css
```css
* {box-sizing:border-box;}

body {margin:0; height:100vh; display:flex; flex-direction:column; overflow:hidden; background-color:#e7e6f6; color:#111; font:13px/20px "Noto Sans", "Open Sans", sans-serif;}

button {border:0; padding:0; margin:0; background:none; color:inherit; font:inherit; white-space:nowrap;}
svg {display:block;}
h1, h2 {margin:0; font:inherit;}
.defs {position:absolute; width:0; height:0;}
.icon {width:20px; height:20px; flex:none;}

/* title bar */
.titlebar {position:relative; flex:none; height:27px; display:flex; align-items:center; border-bottom:1px solid #1d1820; box-shadow:inset 0 -1px #b9b0b8;}
.glass {position:absolute; left:0; top:0; width:100%; height:26px; z-index:-1;}
.app {margin-left:-2px;}
.caption {margin-left:5px; flex:1; font-size:14px; text-shadow:0 0 4px #fff, 0 0 8px #fff;}
.winbuttons {display:flex; align-self:flex-start; height:23px; margin-right:1px; border:1px solid #54443c; border-top:0; border-radius:0 0 5px 5px; box-shadow:0 0 0 1px #c5b2a4;}
.winbuttons button {width:34px; display:flex; align-items:center; justify-content:center; border-right:1px solid #9c8474;}
.winbuttons button.wide {width:59px; border-right:0;}
.winbuttons svg {width:18px; height:18px;}

/* menu */
.menubar {flex:none; height:27px; display:flex; align-items:center; padding-left:7px; background:linear-gradient(to right, #e7e6f6 90%, #e6eff6 90%);}
.menubar button {padding:0 8px;}
.doc {margin-right:2px;}
.mdibuttons {margin-left:auto; display:flex; padding-right:1px;}
.mdibuttons button {padding:0 5px;}
.mdibuttons svg {width:11px; height:11px;}

/* toolbars */
.toolbars {flex:none; display:flex; flex-direction:column; height:61px; background:linear-gradient(to right, #e7e6f6 90%, #e6eff6 90%);}
.toolrow {display:flex; gap:2px; height:30px;}
.toolrow:first-child {gap:8px;}
.toolbar {display:flex; align-items:center; height:30px; padding-right:2px; background:linear-gradient(#f3f3fa, #e2e3ee 45%, #b2b4c7); border-bottom:1px solid #9698aa; border-radius:0 0 4px 0;}
.toolbar.apart {margin-left:8px;}
.toolbar button {width:28px; height:26px; display:flex; align-items:center; justify-content:center; flex:none;}
.toolbar svg {width:20px; height:20px;}
.toolbar button.on {background-color:#d3e7f8; border:1px solid #3f96e4;}
.toolbar button.dim {opacity:.6;}
.toolbar button.arrow {width:15px;}
.arrow::after {content:""; border:4px solid transparent; border-top-color:#000; border-bottom:0;}
.grip {width:8px; height:16px; flex:none; background:radial-gradient(circle at 3px 2px, #9a9cad 1px, transparent 2px) 0 0 / 8px 4px;}
.apart .grip, .apart + .toolbar .grip {width:10px;}
.sep {width:8px; height:20px; flex:none; background:linear-gradient(to right, transparent 4px, #c3c4d0 4px, #c3c4d0 5px, #fff 5px, #fff 6px, transparent 6px);}
.glyph {font:bold 12px "Noto Sans", sans-serif; text-anchor:middle; fill:#000;}
.f3 {font:12px "Noto Sans", sans-serif; text-anchor:middle; fill:#012;}
.toolbar button.threed {flex-direction:column; font:16px/18px "Liberation Serif", serif; color:#333;}
.toolbar .under {width:18px; height:4px;}
.combo {position:relative; width:145px; height:23px; margin:0 3px;}
.combo select {appearance:none; width:100%; height:23px; padding:0 2px; border:1px solid #fff; border-radius:0; background:linear-gradient(#e4e5ee, #b9bbcb) right / 17px 100% no-repeat #fff; color:#111; font:inherit; font-size:14px;}
.combo::after {content:""; position:absolute; right:5px; top:9px; border:4px solid transparent; border-top-color:#000; border-bottom:0; pointer-events:none;}

/* workspace */
.workspace {flex:1; min-height:0; display:flex;}
.project {flex:none; width:197px; display:flex; flex-direction:column; border-right:1px solid #b8bac8; border-bottom:1px solid #888; margin-right:5px;}
.panelhead {display:flex; align-items:center; gap:9px; height:28px; padding:0 4px 0 2px; border-top:1px solid #9a9cab; background:linear-gradient(to right, #c9d3df, #dbe8f3);}
.panelhead h2 {flex:1; color:#4c586c;}
.panelhead svg {width:10px; height:10px;}
.paneltools {border-radius:0; padding:0;}
.tree {flex:1; margin:0; padding:2px 0; list-style:none; overflow:hidden; background-color:#fff; border:1px solid #777; border-right-color:#ccc; border-bottom:0; font-size:14px;}
.tree li {display:flex; align-items:center; gap:7px; height:22px; padding-left:8px; white-space:nowrap;}
.tree li.sub {padding-left:31px;}
.tree .icon {width:18px; height:18px;}
.twist {position:relative; width:11px; height:11px; flex:none; border:1px solid #8a8c98; background-color:#f2f4f8; color:#234; font:12px/9px "Liberation Sans", sans-serif; text-align:center;}
.twist::after {content:""; position:absolute; left:11px; top:4px; width:6px; border-top:1px dotted #888;}
.sub .twist::before {content:""; position:absolute; left:4px; top:-12px; height:11px; border-left:1px dotted #888;}
.hscroll {display:flex; align-items:center; height:20px; margin-bottom:2px; background-color:#efeff0; border-left:1px solid #777;}
.hscroll button {width:22px; display:flex; justify-content:center;}
.hscroll button:last-child {margin-left:auto;}
.hscroll svg {width:12px; height:12px;}
.thumb {width:87px; height:18px; display:flex; align-items:center; justify-content:center; gap:2px; border:1px solid #999; border-radius:2px; background:linear-gradient(#f6f6f7, #d8d9de 50%, #cbccd3);}
.thumb i {width:2px; height:8px; background-color:#777;}

.document {flex:1; min-width:0; display:flex; flex-direction:column;}
.frame {flex:1; min-height:0; display:flex; flex-direction:column; padding:2px; border:1px solid #8b8b95; background-color:#fff;}
.subbar {flex:none; height:30px; display:flex; align-items:center; gap:9px; padding-left:6px; background:linear-gradient(#eff0f8, #e2e3ee 40%, #adafc4); border-bottom:1px solid #8a8a92;}
.canvas {flex:1; min-height:0; background-color:#3f689f; border-left:1px solid #666;}
.canvas svg {width:100%; height:100%;}
.canvas text {font:16px "Liberation Sans", sans-serif; fill:#000;}
.canvas text.green {fill:#087808;}
.line {stroke:#000; stroke-width:1px; fill:none; shape-rendering:crispEdges;}
.red {stroke:#d8142c; stroke-width:1px; fill:none; shape-rendering:crispEdges;}

.tabstrip {flex:none; height:29px; display:flex; align-items:center; background-color:#efefef; border-bottom:1px solid #8b8b95;}
.tabstrip > button {width:19px; display:flex; justify-content:center;}
.tabstrip button svg {width:11px; height:11px;}
.tabstrip .next {margin-left:auto; width:32px;}
.tab {display:flex; align-self:flex-start; height:28px; margin-top:-1px;}
.slant {width:27px; height:28px;}
.tabbody {display:flex; align-items:center; gap:9px; padding:0 9px 0 7px; border-right:1px solid #555; border-bottom:1px solid #555; border-radius:0 0 4px 0; background-color:#fff;}
.tabbody a {color:#000; font-weight:bold; font-size:14px; text-decoration:none; white-space:nowrap;}

.palette {flex:none; width:43px; align-self:flex-start; display:flex; flex-direction:column; align-items:center; padding:3px 2px 1px 0; border-left:2px solid #a0a2b2; background:linear-gradient(to right, #f2f2fa, #e2e3ee 45%, #adafc4);}
.palette button {height:35px; display:flex; align-items:center;}
.palette svg {width:30px; height:28px;}
.dots {width:24px; height:6px; background:radial-gradient(circle at 2px 3px, #8a8c9d 1px, transparent 2px) 0 0 / 4px 6px;}

/* status */
.statusbar {flex:none; height:25px; display:flex; align-items:center; border-top:1px solid #fff; background-color:#eee6e8;}
.statusbar span {min-width:48px; padding-left:4px; border-left:1px solid #c9c3c6;}
.statusbar .help {flex:1; padding-left:2px; border-left:0;}
.statusbar .mode {padding-right:19px; border-left:0;}
.taskbar {flex:none; height:4px; border-top:1px solid #1c1416; background:linear-gradient(to right, #43282a 140px, #d8cfcf 140px, #a89c9c 201px, #43282a 201px, #43282a 280px, #b8acac 280px, #a89c9c 346px, #43282a 346px, #43282a 350px, #a89c9c 350px, #a89c9c 415px, #43282a 415px, #43282a 490px, #a89c9c 490px, #a89c9c 625px, #43282a 625px, #5a3a38);}
```
